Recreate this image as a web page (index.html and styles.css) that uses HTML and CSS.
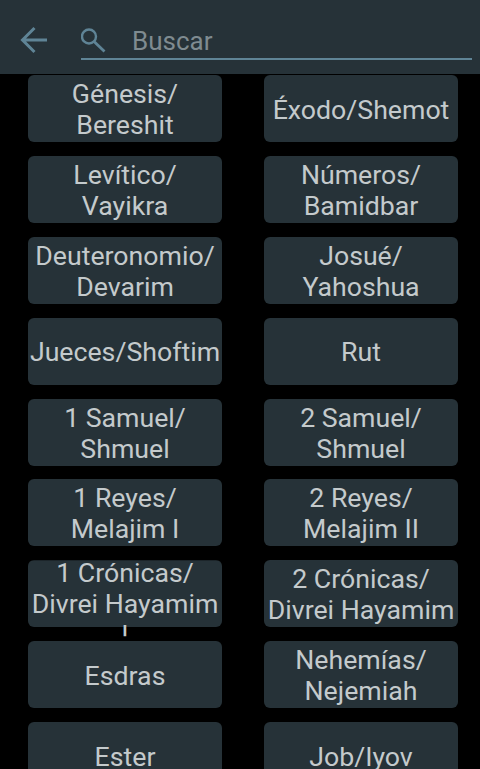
FILE: index.html
```html
<!DOCTYPE html>
<html lang="es">
<head>
<meta charset="utf-8">
<title>Buscar</title>
<link rel="stylesheet" href="styles.css">
</head>
<body>
<header class="bar">
  <svg class="back" width="30" height="28" viewBox="0 0 30 28"><path d="M28 14H3.5M15.5 2 3.5 14l12 12" fill="none" stroke="#5f8496" stroke-width="3"/></svg>
  <div class="search">
    <svg class="lens" width="26" height="26" viewBox="0 0 26 26"><circle cx="8" cy="9.5" r="7" fill="none" stroke="#5f8496" stroke-width="2.4"/><path d="M13 14.5 23.5 24.5" fill="none" stroke="#5f8496" stroke-width="2.8"/></svg>
    <span class="hint">Buscar</span>
  </div>
</header>
<main class="grid">
  <button class="book">Génesis/<br>Bereshit</button>
  <button class="book">Éxodo/Shemot</button>
  <button class="book">Levítico/<br>Vayikra</button>
  <button class="book">Números/<br>Bamidbar</button>
  <button class="book">Deuteronomio/<br>Devarim</button>
  <button class="book">Josué/<br>Yahoshua</button>
  <button class="book">Jueces/Shoftim</button>
  <button class="book">Rut</button>
  <button class="book">1 Samuel/<br>Shmuel</button>
  <button class="book">2 Samuel/<br>Shmuel</button>
  <button class="book">1 Reyes/<br>Melajim I</button>
  <button class="book">2 Reyes/<br>Melajim II</button>
  <button class="book over"><span class="over-text">1 Crónicas/<br>Divrei Hayamim<br>I</span></button>
  <button class="book">2 Crónicas/<br>Divrei Hayamim</button>
  <button class="book">Esdras</button>
  <button class="book">Nehemías/<br>Nejemiah</button>
  <button class="book">Ester</button>
  <button class="book">Job/Iyov</button>
</main>
</body>
</html>
```
FILE: styles.css
```css
html, body {
  margin: 0;
  height: 769px;
  overflow: hidden;
  background: #000;
  font-family: Roboto, sans-serif;
}
.bar {
  height: 74px;
  box-sizing: border-box;
  background: #263238;
  display: flex;
  align-items: flex-start;
  padding: 26px 8px 0 19px;
}
.back { flex: none; }
.search {
  flex: 1;
  margin-left: 32px;
  height: 32px;
  border-bottom: 2px solid #5f8496;
  display: flex;
  align-items: flex-start;
}
.lens { flex: none; margin-top: 1px; }
.hint {
  margin-left: 25px;
  font-size: 26px;
  line-height: 30px;
  color: #7f8b90;
}
.grid {
  display: grid;
  grid-template-columns: 194px 194px;
  grid-auto-rows: 67px;
  column-gap: 42px;
  row-gap: 13.9px;
  padding: 1px 0 0 28px;
}
.book {
  margin: 0;
  padding: 3px 0 0;
  border: 0;
  border-radius: 6px;
  background: #263238;
  color: #c4cacc;
  font: inherit;
  font-size: 26.7px;
  line-height: 31px;
  text-align: center;
  white-space: nowrap;
}
.over {
  display: flex;
  justify-content: center;
  align-items: flex-start;
  padding-top: 0;
  clip-path: inset(0 0 -9px 0);
}
.over-text { display: block; margin-top: -2px; }
```
